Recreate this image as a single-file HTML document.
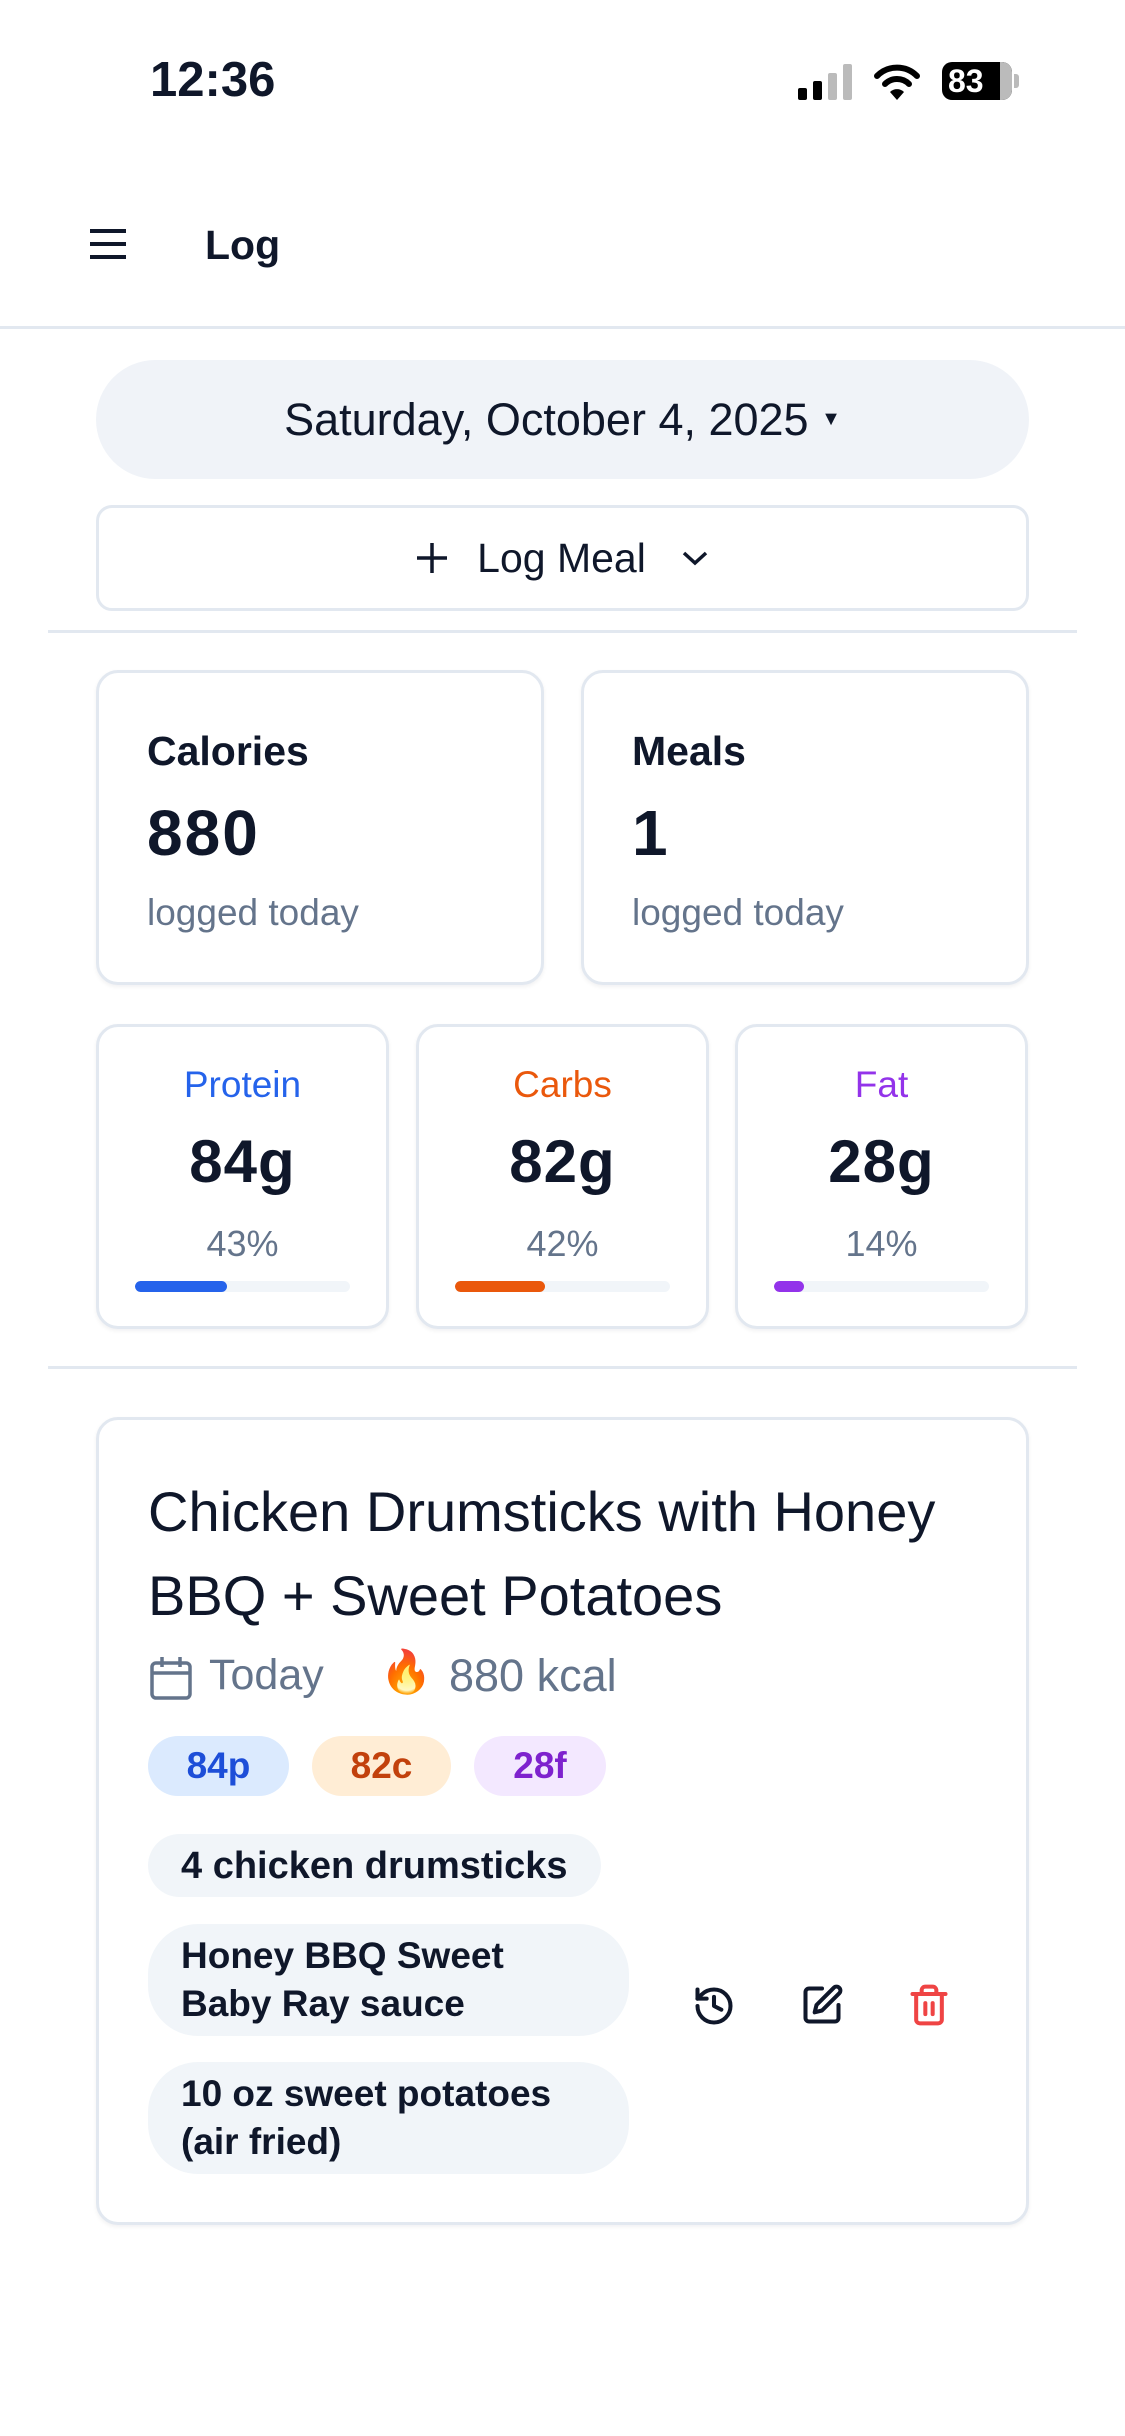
<!DOCTYPE html>
<html><head><meta charset="utf-8"><style>
*{box-sizing:border-box;margin:0;padding:0}
body{width:1125px;height:2436px;background:#fff;font-family:"Liberation Sans",sans-serif;color:#0f172a;position:relative;overflow:hidden}
.a{position:absolute}
.card{position:absolute;border:3px solid #e2e8f0;border-radius:22px;background:#fff;box-shadow:0 2px 4px rgba(15,23,42,0.06)}
.line{position:absolute;height:3px;background:#e2e8f0}
.lbl{font-size:41px;font-weight:700;position:absolute;left:48px}
.num{font-size:64px;font-weight:700;position:absolute;left:48px;letter-spacing:2px}
.sub{font-size:37px;color:#64748b;position:absolute;left:48px}
.m{text-align:center}
.m .t{position:absolute;left:0;right:0;top:37px;font-size:37px}
.m .v{position:absolute;left:0;right:0;top:100px;font-size:60px;font-weight:700;letter-spacing:1px}
.m .p{position:absolute;left:0;right:0;top:196px;font-size:36px;color:#64748b}
.m .bar{position:absolute;left:36px;right:36px;top:254px;height:11px;border-radius:6px;background:#f1f5f9;overflow:hidden}
.m .bar i{display:block;height:100%;border-radius:6px}
.chip{position:absolute;border-radius:40px;font-weight:700;font-size:37px;display:flex;align-items:center;justify-content:center}
.ing{position:absolute;left:148px;background:#f1f5f9;border-radius:50px;font-weight:700;font-size:37px;padding:0 33px;display:flex;align-items:center;line-height:48px}
</style></head><body>
<div class="a" style="left:150px;top:52px;font-size:49px;font-weight:700">12:36</div>
<svg class="a" style="left:798px;top:64px" width="58" height="36" viewBox="0 0 58 36"><rect x="0" y="24" width="9" height="12" rx="2" fill="#000"/><rect x="15" y="17" width="9" height="19" rx="2" fill="#000"/><rect x="30" y="9" width="9" height="27" rx="2" fill="#bbb"/><rect x="45" y="0" width="9" height="36" rx="2" fill="#bbb"/></svg>
<svg class="a" style="left:873px;top:62px" width="48" height="38" viewBox="0 0 48 38"><path d="M4 14 A28 28 0 0 1 44 14" stroke="#000" stroke-width="6" fill="none" stroke-linecap="round"/><path d="M12 22 A17 17 0 0 1 36 22" stroke="#000" stroke-width="6" fill="none" stroke-linecap="round"/><path d="M17 30 L24 38 L31 30 A10 10 0 0 0 17 30Z" fill="#000"/></svg>
<div class="a" style="left:942px;top:62px;width:70px;height:38px;background:#000;border-radius:10px;color:#fff;font-weight:700;font-size:32px;line-height:38px;padding-left:6px;overflow:hidden">83<span style="position:absolute;right:0;top:0;width:12px;height:38px;background:#bbb"></span></div>
<div class="a" style="left:1014px;top:74px;width:5px;height:14px;background:#bbb;border-radius:0 3px 3px 0"></div>

<svg class="a" style="left:90px;top:228px" width="36" height="32" viewBox="0 0 36 32"><path d="M0 3H36M0 16H36M0 29H36" stroke="#0f172a" stroke-width="4"/></svg>
<div class="a" style="left:205px;top:222px;font-size:41px;font-weight:700">Log</div>
<div class="line" style="left:0;right:0;top:326px"></div>

<div class="a" style="left:96px;top:360px;width:933px;height:119px;border-radius:60px;background:#f0f3f8;display:flex;align-items:center;justify-content:center;font-size:45px">Saturday, October 4, 2025&nbsp;<span style="font-size:20px">▼</span></div>
<div class="card" style="left:96px;top:505px;width:933px;height:106px;box-shadow:none;border-radius:16px;display:flex;align-items:center;justify-content:center;font-size:41px;font-weight:500">
<svg width="34" height="34" viewBox="0 0 34 34" style="margin-right:28px"><path d="M17 2V32M2 17H32" stroke="#0f172a" stroke-width="3.5"/></svg>Log Meal
<svg width="30" height="20" viewBox="0 0 30 20" style="margin-left:34px"><path d="M4 5L15 15L26 5" stroke="#0f172a" stroke-width="3.5" fill="none"/></svg></div>
<div class="line" style="left:48px;width:1029px;top:630px"></div>

<div class="card" style="left:96px;top:670px;width:448px;height:315px"><div class="lbl" style="top:55px">Calories</div><div class="num" style="top:123px">880</div><div class="sub" style="top:219px">logged today</div></div>
<div class="card" style="left:581px;top:670px;width:448px;height:315px"><div class="lbl" style="top:55px">Meals</div><div class="num" style="top:123px">1</div><div class="sub" style="top:219px">logged today</div></div>

<div class="card m" style="left:96px;top:1024px;width:293px;height:305px"><div class="t" style="color:#2563eb">Protein</div><div class="v">84g</div><div class="p">43%</div><div class="bar"><i style="width:43%;background:#2563eb"></i></div></div>
<div class="card m" style="left:416px;top:1024px;width:293px;height:305px"><div class="t" style="color:#ea580c">Carbs</div><div class="v">82g</div><div class="p">42%</div><div class="bar"><i style="width:42%;background:#ea580c"></i></div></div>
<div class="card m" style="left:735px;top:1024px;width:293px;height:305px"><div class="t" style="color:#9333ea">Fat</div><div class="v">28g</div><div class="p">14%</div><div class="bar"><i style="width:14%;background:#9333ea"></i></div></div>
<div class="line" style="left:48px;width:1029px;top:1366px"></div>

<div class="card" style="left:96px;top:1417px;width:933px;height:808px"></div>
<div class="a" style="left:148px;top:1470px;font-size:56px;line-height:84px;font-weight:400;width:860px">Chicken Drumsticks with Honey<br>BBQ + Sweet Potatoes</div>
<svg class="a" style="left:150px;top:1656px" width="42" height="44" viewBox="0 0 42 44"><rect x="2" y="7" width="38" height="35" rx="4" stroke="#64748b" stroke-width="3.5" fill="none"/><path d="M2 17H40M12 1V11M30 1V11" stroke="#64748b" stroke-width="3.5"/></svg>
<div class="a" style="left:209px;top:1651px;font-size:43px;color:#64748b">Today</div>
<div class="a" style="left:380px;top:1648px;font-size:42px">🔥</div>
<div class="a" style="left:449px;top:1650px;font-size:45px;color:#64748b">880 kcal</div>
<div class="chip" style="left:148px;top:1736px;width:141px;height:60px;background:#dbeafe;color:#1d4ed8">84p</div>
<div class="chip" style="left:312px;top:1736px;width:139px;height:60px;background:#ffedd5;color:#c2410c">82c</div>
<div class="chip" style="left:474px;top:1736px;width:132px;height:60px;background:#f3e8ff;color:#7e22ce">28f</div>
<div class="ing" style="top:1834px;height:63px;font-size:38px">4 chicken drumsticks</div>
<div class="ing" style="top:1924px;height:112px;width:481px">Honey BBQ Sweet<br>Baby Ray sauce</div>
<div class="ing" style="top:2062px;height:112px;width:481px">10 oz sweet potatoes<br>(air fried)</div>
<svg class="a" style="left:692px;top:1984px" width="44" height="44" viewBox="0 0 24 24" fill="none" stroke="#0f172a" stroke-width="2.2" stroke-linecap="round" stroke-linejoin="round"><path d="M3 12a9 9 0 1 0 9-9 9.75 9.75 0 0 0-6.74 2.74L3 8"/><path d="M3 3v5h5"/><path d="M12 7v5l4 2"/></svg>
<svg class="a" style="left:800px;top:1983px" width="44" height="44" viewBox="0 0 24 24" fill="none" stroke="#0f172a" stroke-width="2.2" stroke-linecap="round" stroke-linejoin="round"><path d="M12 3H5a2 2 0 0 0-2 2v14a2 2 0 0 0 2 2h14a2 2 0 0 0 2-2v-7"/><path d="M18.4 2.6a2.1 2.1 0 0 1 3 3L12 15l-4 1 1-4Z"/></svg>
<svg class="a" style="left:907px;top:1982px" width="44" height="46" viewBox="0 0 24 24" fill="none" stroke="#ef4444" stroke-width="2.2" stroke-linecap="round" stroke-linejoin="round"><path d="M3 6h18"/><path d="M19 6v14a2 2 0 0 1-2 2H7a2 2 0 0 1-2-2V6"/><path d="M8 6V4a2 2 0 0 1 2-2h4a2 2 0 0 1 2 2v2"/><path d="M10 11v6M14 11v6"/></svg>
</body></html>
